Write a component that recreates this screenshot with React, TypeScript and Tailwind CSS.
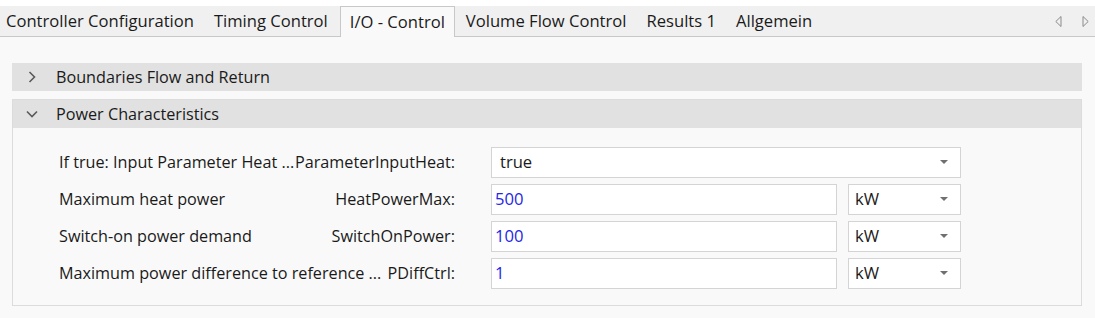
const font = { fontFamily: '"Segoe UI", "Open Sans", "Noto Sans", sans-serif' };

const tabs = [
  "Controller Configuration",
  "Timing Control",
  "I/O - Control",
  "Volume Flow Control",
  "Results 1",
  "Allgemein",
];

function Caret() {
  return (
    <svg width="8" height="5" viewBox="0 0 8 5" className="shrink-0">
      <path d="M0 0 L8 0 L4 4 Z" fill="#707070" />
    </svg>
  );
}

function Select({ value, className }: { value: string; className: string }) {
  return (
    <div
      className={`flex h-[31px] items-center justify-between border border-[#d4d4d4] bg-white pl-[6px] pr-[12px] text-[#1a1a1a] ${className}`}
    >
      <span>{value}</span>
      <Caret />
    </div>
  );
}

function NumberInput({ value }: { value: string }) {
  return (
    <div className="flex h-[31px] w-[346px] items-center border border-[#d4d4d4] bg-white pl-[3px] text-[#2626e6]">
      {value}
    </div>
  );
}

const rows = [
  { label: "Maximum heat power", name: "HeatPowerMax:", value: "500" },
  { label: "Switch-on power demand", name: "SwitchOnPower:", value: "100" },
  { label: "Maximum power difference to reference ...", name: "PDiffCtrl:", value: "1" },
];

function Label({ label, name }: { label: string; name: string }) {
  return (
    <div className="flex w-[396px] justify-between whitespace-nowrap text-[16.2px]">
      <span>{label}</span>
      <span>{name}</span>
    </div>
  );
}

export default function App() {
  return (
    <div className="h-[318px] w-[1095px] bg-[#f9f9f9] text-[16.6px] text-[#1a1a1a]" style={font}>
      {/* tab strip */}
      <div className="h-[6px] bg-white" />
      <div className="flex h-[31px] items-stretch border-b border-[#c8c8c8] bg-[#f0f0f0]">
        <div className="flex items-end">
          {tabs.map((t) =>
            t === "I/O - Control" ? (
              <div
                key={t}
                className="-mb-px ml-[2px] mr-[1px] flex h-[31px] items-center border border-b-0 border-[#c8c8c8] bg-[#f9f9f9] px-[9px]"
              >
                {t}
              </div>
            ) : (
              <div key={t} className="flex h-[30px] items-center px-[10px] first:pl-[6px]">
                {t}
              </div>
            )
          )}
        </div>
        <div className="ml-auto flex items-center gap-[20px] pr-[6px]">
          <svg width="7" height="11" viewBox="0 0 7 11">
            <path d="M6 0.5 L0.8 5.5 L6 10.5 Z" fill="none" stroke="#8a8a8a" strokeWidth="1" />
          </svg>
          <svg width="7" height="11" viewBox="0 0 7 11">
            <path d="M1 0.5 L6.2 5.5 L1 10.5 Z" fill="none" stroke="#8a8a8a" strokeWidth="1" />
          </svg>
        </div>
      </div>

      <div className="flex flex-col gap-[8px] pl-[12px] pr-[13px] pt-[26px]">
        {/* collapsed section */}
        <div className="flex h-[28px] items-center bg-[#e1e1e1]">
          <svg width="8" height="12" viewBox="0 0 8 12" className="ml-[16px]">
            <path d="M1.5 1 L6.5 6 L1.5 11" fill="none" stroke="#5a5a5a" strokeWidth="1.6" />
          </svg>
          <span className="ml-[20px] text-[16.2px]">Boundaries Flow and Return</span>
        </div>

        {/* expanded section */}
        <div className="border border-[#dcdcdc]">
          <div className="flex h-[28px] items-center bg-[#e1e1e1]">
            <svg width="12" height="8" viewBox="0 0 12 8" className="ml-[13px]">
              <path d="M1 1.5 L6 6.5 L11 1.5" fill="none" stroke="#5a5a5a" strokeWidth="1.6" />
            </svg>
            <span className="ml-[18px] text-[16.2px]">Power Characteristics</span>
          </div>
          <div className="flex flex-col gap-[6px] pb-[16px] pl-[46px] pt-[19px]">
            <div className="flex items-center">
              <Label label="If true: Input Parameter Heat ..." name="ParameterInputHeat:" />
              <Select value="true" className="ml-[36px] w-[470px] pl-[8px]" />
            </div>
            {rows.map((r) => (
              <div key={r.name} className="flex items-center">
                <Label label={r.label} name={r.name} />
                <div className="ml-[36px] flex gap-[11px]">
                  <NumberInput value={r.value} />
                  <Select value="kW" className="w-[113px]" />
                </div>
              </div>
            ))}
          </div>
        </div>
      </div>
    </div>
  );
}
